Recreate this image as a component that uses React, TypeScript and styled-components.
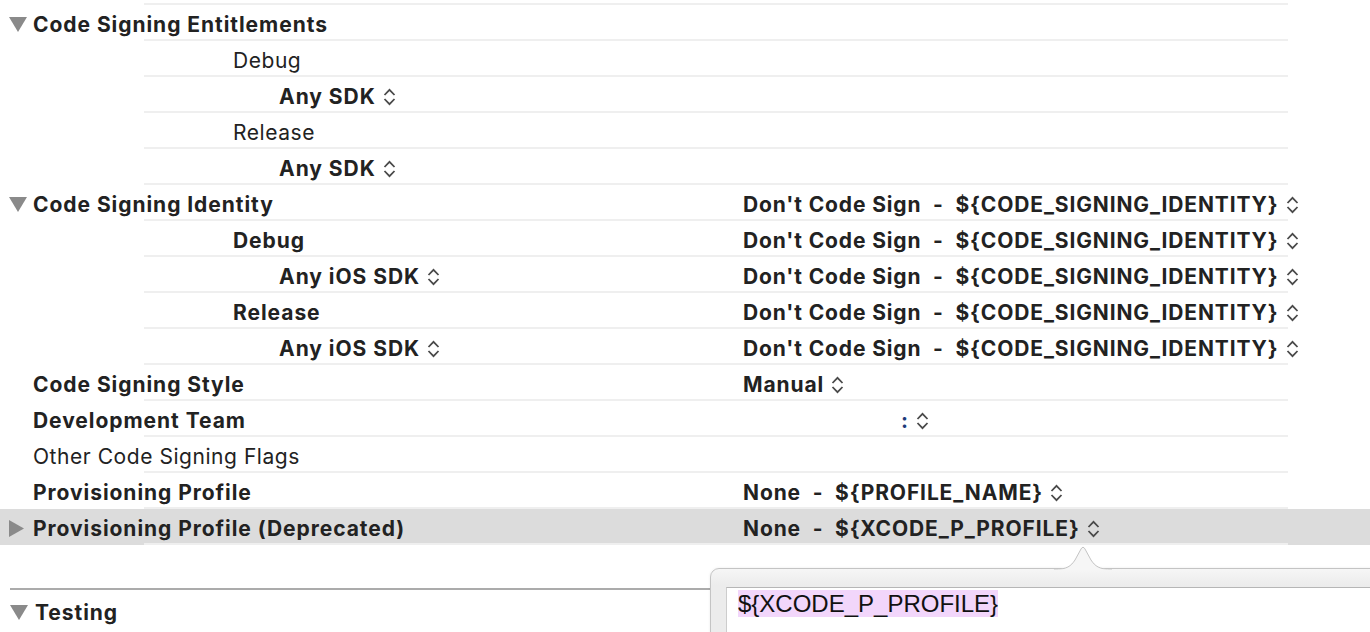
import React from 'react';
import styled, { createGlobalStyle } from 'styled-components';

const Global = createGlobalStyle`
  html, body { margin: 0; padding: 0; background: #fff; }
  body {
    font-family: Inter, "Noto Sans", sans-serif;
    color: #222;
    overflow: hidden;
    -webkit-font-smoothing: antialiased;
  }
`;

const rule = (c: string) => `linear-gradient(${c}, ${c}) no-repeat 144px 100% / 1144px 2px`;

const Page = styled.div`
  position: relative;
  width: 1370px;
  height: 632px;
  overflow: hidden;
  background: #fff;
`;

const TopEdge = styled.div`
  height: 5px;
  background: ${rule('#efefef')};
`;

const Row = styled.div<{ $selected?: boolean }>`
  display: grid;
  grid-template-columns: 743px 1fr;
  align-items: center;
  height: 36px;
  box-sizing: border-box;
  padding-top: 3px;
  font-size: 21px;
  background: ${rule('#efefef')}, ${(p) => (p.$selected ? '#dcdcdc' : '#fff')};
`;

const Label = styled.div<{ $indent: number; $bold?: boolean }>`
  display: flex;
  align-items: center;
  padding-left: ${(p) => p.$indent}px;
  font-weight: ${(p) => (p.$bold ? 700 : 400)};
  letter-spacing: ${(p) => (p.$bold ? '0.95px' : '0.55px')};
  white-space: pre;
`;

const Slot = styled.span`
  display: flex;
  align-items: center;
  width: 33px;
  padding-left: 9px;
  box-sizing: border-box;
`;

const Value = styled.div<{ $offset?: number }>`
  display: flex;
  align-items: center;
  padding-left: ${(p) => p.$offset ?? 0}px;
  font-weight: 700;
  letter-spacing: 0.87px;
  white-space: pre;
`;

const Dots = styled.span`
  color: #1d3b7a;
  font-weight: 700;
`;

const StepperIcon = styled.svg`
  margin-left: 7px;
  flex: none;
`;

const Gap = styled.div`
  height: 43px;
`;

const SectionHeader = styled.div`
  display: flex;
  align-items: center;
  margin-left: 10px;
  height: 44px;
  border-top: 2px solid #ababab;
  font-size: 21px;
  font-weight: 700;
  letter-spacing: 0.95px;
`;

const SectionSlot = styled.span`
  display: flex;
  align-items: center;
  width: 25px;
`;

const Popover = styled.div`
  position: absolute;
  left: 710px;
  top: 568px;
  width: 720px;
  height: 120px;
  box-sizing: border-box;
  border: 1px solid #c4c4c4;
  border-top-left-radius: 9px;
  background: linear-gradient(#f6f6f6, #ececec 16px);
  box-shadow: 0 0 3px rgba(0, 0, 0, 0.08);
  padding: 18px 0 0 15px;
`;

const Arrow = styled.svg`
  position: absolute;
  left: 343px;
  top: -24px;
`;

const Field = styled.div`
  height: 100px;
  background: #fff;
  border-top: 1px solid #b6b6b6;
  border-left: 1px solid #cdcdcd;
  padding: 2px 11px;
`;

const Selected = styled.span`
  display: inline-block;
  font-family: "Liberation Sans", Arial, sans-serif;
  font-size: 24px;
  line-height: 27px;
  color: #111;
  background: #f2d6fb;
`;

const Stepper = () => (
  <StepperIcon width="13" height="20" viewBox="0 0 13 20">
    <polyline points="1.5,8 6.5,2.8 11.5,8" fill="none" stroke="#4a4a4a" strokeWidth="1.8" />
    <polyline points="1.5,12 6.5,17.2 11.5,12" fill="none" stroke="#4a4a4a" strokeWidth="1.8" />
  </StepperIcon>
);

const TriDown = () => (
  <svg width="18" height="15" viewBox="0 0 18 15">
    <polygon points="0,0 18,0 9,15" fill="#8a8a8a" />
  </svg>
);

const TriRight = () => (
  <svg width="15" height="17" viewBox="0 0 15 17">
    <polygon points="0,0 15,8.5 0,17" fill="#8a8a8a" />
  </svg>
);

type RowData = {
  label: string;
  level: 0 | 1 | 2;
  bold?: boolean;
  disclosure?: 'down' | 'right';
  labelStepper?: boolean;
  value?: string;
  valueOffset?: number;
  dots?: boolean;
  selected?: boolean;
};

const IDENT = "Don't Code Sign  -  ${CODE_SIGNING_IDENTITY}";

const rows: RowData[] = [
  { label: 'Code Signing Entitlements', level: 0, bold: true, disclosure: 'down' },
  { label: 'Debug', level: 1 },
  { label: 'Any SDK', level: 2, bold: true, labelStepper: true },
  { label: 'Release', level: 1 },
  { label: 'Any SDK', level: 2, bold: true, labelStepper: true },
  { label: 'Code Signing Identity', level: 0, bold: true, disclosure: 'down', value: IDENT },
  { label: 'Debug', level: 1, bold: true, value: IDENT },
  { label: 'Any iOS SDK', level: 2, bold: true, labelStepper: true, value: IDENT },
  { label: 'Release', level: 1, bold: true, value: IDENT },
  { label: 'Any iOS SDK', level: 2, bold: true, labelStepper: true, value: IDENT },
  { label: 'Code Signing Style', level: 0, bold: true, value: 'Manual' },
  { label: 'Development Team', level: 0, bold: true, dots: true, valueOffset: 158 },
  { label: 'Other Code Signing Flags', level: 0 },
  { label: 'Provisioning Profile', level: 0, bold: true, value: 'None  -  ${PROFILE_NAME}' },
  {
    label: 'Provisioning Profile (Deprecated)',
    level: 0,
    bold: true,
    disclosure: 'right',
    value: 'None  -  ${XCODE_P_PROFILE}',
    selected: true,
  },
];

const indentFor = (level: number) => (level === 0 ? 0 : level === 1 ? 233 : 279);

export default function App() {
  return (
    <Page>
      <Global />
      <TopEdge />
      {rows.map((r, i) => (
        <Row key={i} $selected={r.selected}>
          <Label $indent={indentFor(r.level)} $bold={r.bold}>
            {r.level === 0 && (
              <Slot>{r.disclosure === 'down' ? <TriDown /> : r.disclosure === 'right' ? <TriRight /> : null}</Slot>
            )}
            {r.label}
            {r.labelStepper && <Stepper />}
          </Label>
          <Value $offset={r.valueOffset}>
            {r.value && (
              <>
                {r.value}
                <Stepper />
              </>
            )}
            {r.dots && (
              <>
                <Dots>:</Dots>
                <Stepper />
              </>
            )}
          </Value>
        </Row>
      ))}
      <Gap />
      <SectionHeader>
        <SectionSlot>
          <TriDown />
        </SectionSlot>
        Testing
      </SectionHeader>
      <Popover>
        <Arrow width="58" height="25" viewBox="0 0 58 25">
          <path
            d="M0 24.5 C 13 24.5, 17 21, 21 15 L 27 4 Q 29 0.5 31 4 L 37 15 C 41 21, 45 24.5, 58 24.5"
            fill="#f6f6f6"
            stroke="#c4c4c4"
            strokeWidth="1"
          />
          <rect x="0" y="24.5" width="58" height="1" fill="#f6f6f6" />
        </Arrow>
        <Field>
          <Selected>{'${XCODE_P_PROFILE}'}</Selected>
        </Field>
      </Popover>
    </Page>
  );
}
